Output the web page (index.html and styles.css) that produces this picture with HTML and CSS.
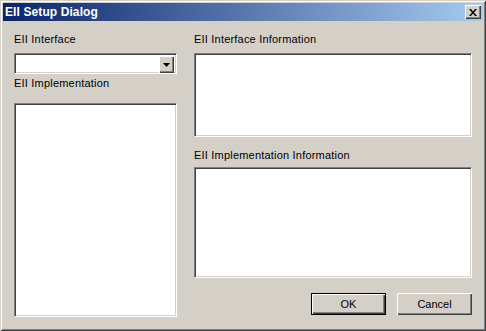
FILE: index.html
```html
<!DOCTYPE html>
<html lang="en">
<head>
    <meta charset="UTF-8">
    <title>EII Setup Dialog</title>
    <link rel="stylesheet" href="styles.css">
</head>
<body>
    <div class="window">
        <div class="titlebar">
            <span class="title">EII Setup Dialog</span>
            <button class="close-btn" aria-label="Close">
                <svg width="8" height="7" viewBox="0 0 8 7">
                    <path d="M0 0h2l2 2.5L6 0h2L5 3.5 8 7H6L4 4.5 2 7H0l3-3.5z" fill="#000"/>
                </svg>
            </button>
        </div>

        <div class="dialog-body">
            <!-- left column -->
            <div class="col col-left">
                <label class="lbl">EII Interface</label>
                <div class="combo sunken">
                    <div class="combo-text"></div>
                    <div class="combo-arrow">
                        <svg width="7" height="4" viewBox="0 0 7 4">
                            <path d="M0 0h7L3.5 4z" fill="#000"/>
                        </svg>
                    </div>
                </div>
                <label class="lbl lbl-impl">EII Implementation</label>
                <div class="listbox sunken"></div>
            </div>

            <!-- right column -->
            <div class="col col-right">
                <label class="lbl">EII Interface Information</label>
                <div class="info-box info-interface sunken"></div>
                <label class="lbl lbl-impl-info">EII Implementation Information</label>
                <div class="info-box info-impl sunken"></div>
                <div class="buttons">
                    <button class="btn btn-default">OK</button>
                    <button class="btn">Cancel</button>
                </div>
            </div>
        </div>
    </div>
</body>
</html>
```

FILE: styles.css
```css
/* base */
body {
    margin: 0;
    padding: 0;
    font-family: "Liberation Sans", Arial, sans-serif;
    font-size: 11px;
    color: #000;
    background: #d4d0c8;
}

/* window frame */
.window {
    width: 486px;
    height: 331px;
    box-sizing: border-box;
    display: flex;
    flex-direction: column;
    background: #d4d0c8;
    padding: 3px;
    box-shadow: inset 1px 1px #d4d0c8, inset -1px -1px #404040,
                inset 2px 2px #fff, inset -2px -2px #808080;
}

/* title bar */
.titlebar {
    height: 18px;
    display: flex;
    align-items: center;
    justify-content: space-between;
    padding: 0 2px;
    background: linear-gradient(to right, #0a246a, #a6caf0);
}

.title {
    color: #fff;
    font-weight: bold;
    font-size: 12px;
    letter-spacing: 0.1px;
}

.close-btn {
    width: 16px;
    height: 14px;
    padding: 0;
    margin: 0;
    display: flex;
    align-items: center;
    justify-content: center;
    background: #d4d0c8;
    border: none;
    box-shadow: inset 1px 1px #fff, inset -1px -1px #404040, inset -2px -2px #808080;
}

/* body */
.dialog-body {
    flex: 1;
    display: flex;
    gap: 17px;
    padding: 12px 11px 0 11px;
}

.col {
    display: flex;
    flex-direction: column;
}

.col-left {
    width: 163px;
}

.col-right {
    width: 278px;
}

.lbl {
    display: block;
    line-height: 13px;
    height: 13px;
    letter-spacing: 0.2px;
}

.sunken {
    box-sizing: border-box;
    background: #fff;
    border-top: 1px solid #808080;
    border-left: 1px solid #808080;
    border-right: 1px solid #fff;
    border-bottom: 1px solid #fff;
    box-shadow: inset 1px 1px #404040, inset -1px -1px #d4d0c8;
}

/* combo box */
.combo {
    margin-top: 7px;
    height: 21px;
    display: flex;
    padding: 2px;
}

.combo-text {
    flex: 1;
}

.combo-arrow {
    width: 15px;
    height: 17px;
    display: flex;
    align-items: center;
    justify-content: center;
    background: #d4d0c8;
    box-shadow: inset 1px 1px #fff, inset -1px -1px #404040, inset -2px -2px #808080;
}

.lbl-impl {
    margin-top: 3px;
}

.listbox {
    margin-top: 13px;
    height: 214px;
}

/* info boxes */
.info-interface {
    margin-top: 7px;
    height: 84px;
}

.lbl-impl-info {
    margin-top: 12px;
}

.info-impl {
    margin-top: 5px;
    height: 111px;
}

/* buttons */
.buttons {
    margin-top: 15px;
    display: flex;
    justify-content: flex-end;
    gap: 11px;
}

.btn {
    width: 75px;
    height: 22px;
    padding: 0;
    font-family: "Liberation Sans", Arial, sans-serif;
    font-size: 11px;
    color: #000;
    background: #d4d0c8;
    border: none;
    box-shadow: inset 1px 1px #fff, inset -1px -1px #404040, inset -2px -2px #808080;
}

.btn-default {
    border: 1px solid #000;
}
```
